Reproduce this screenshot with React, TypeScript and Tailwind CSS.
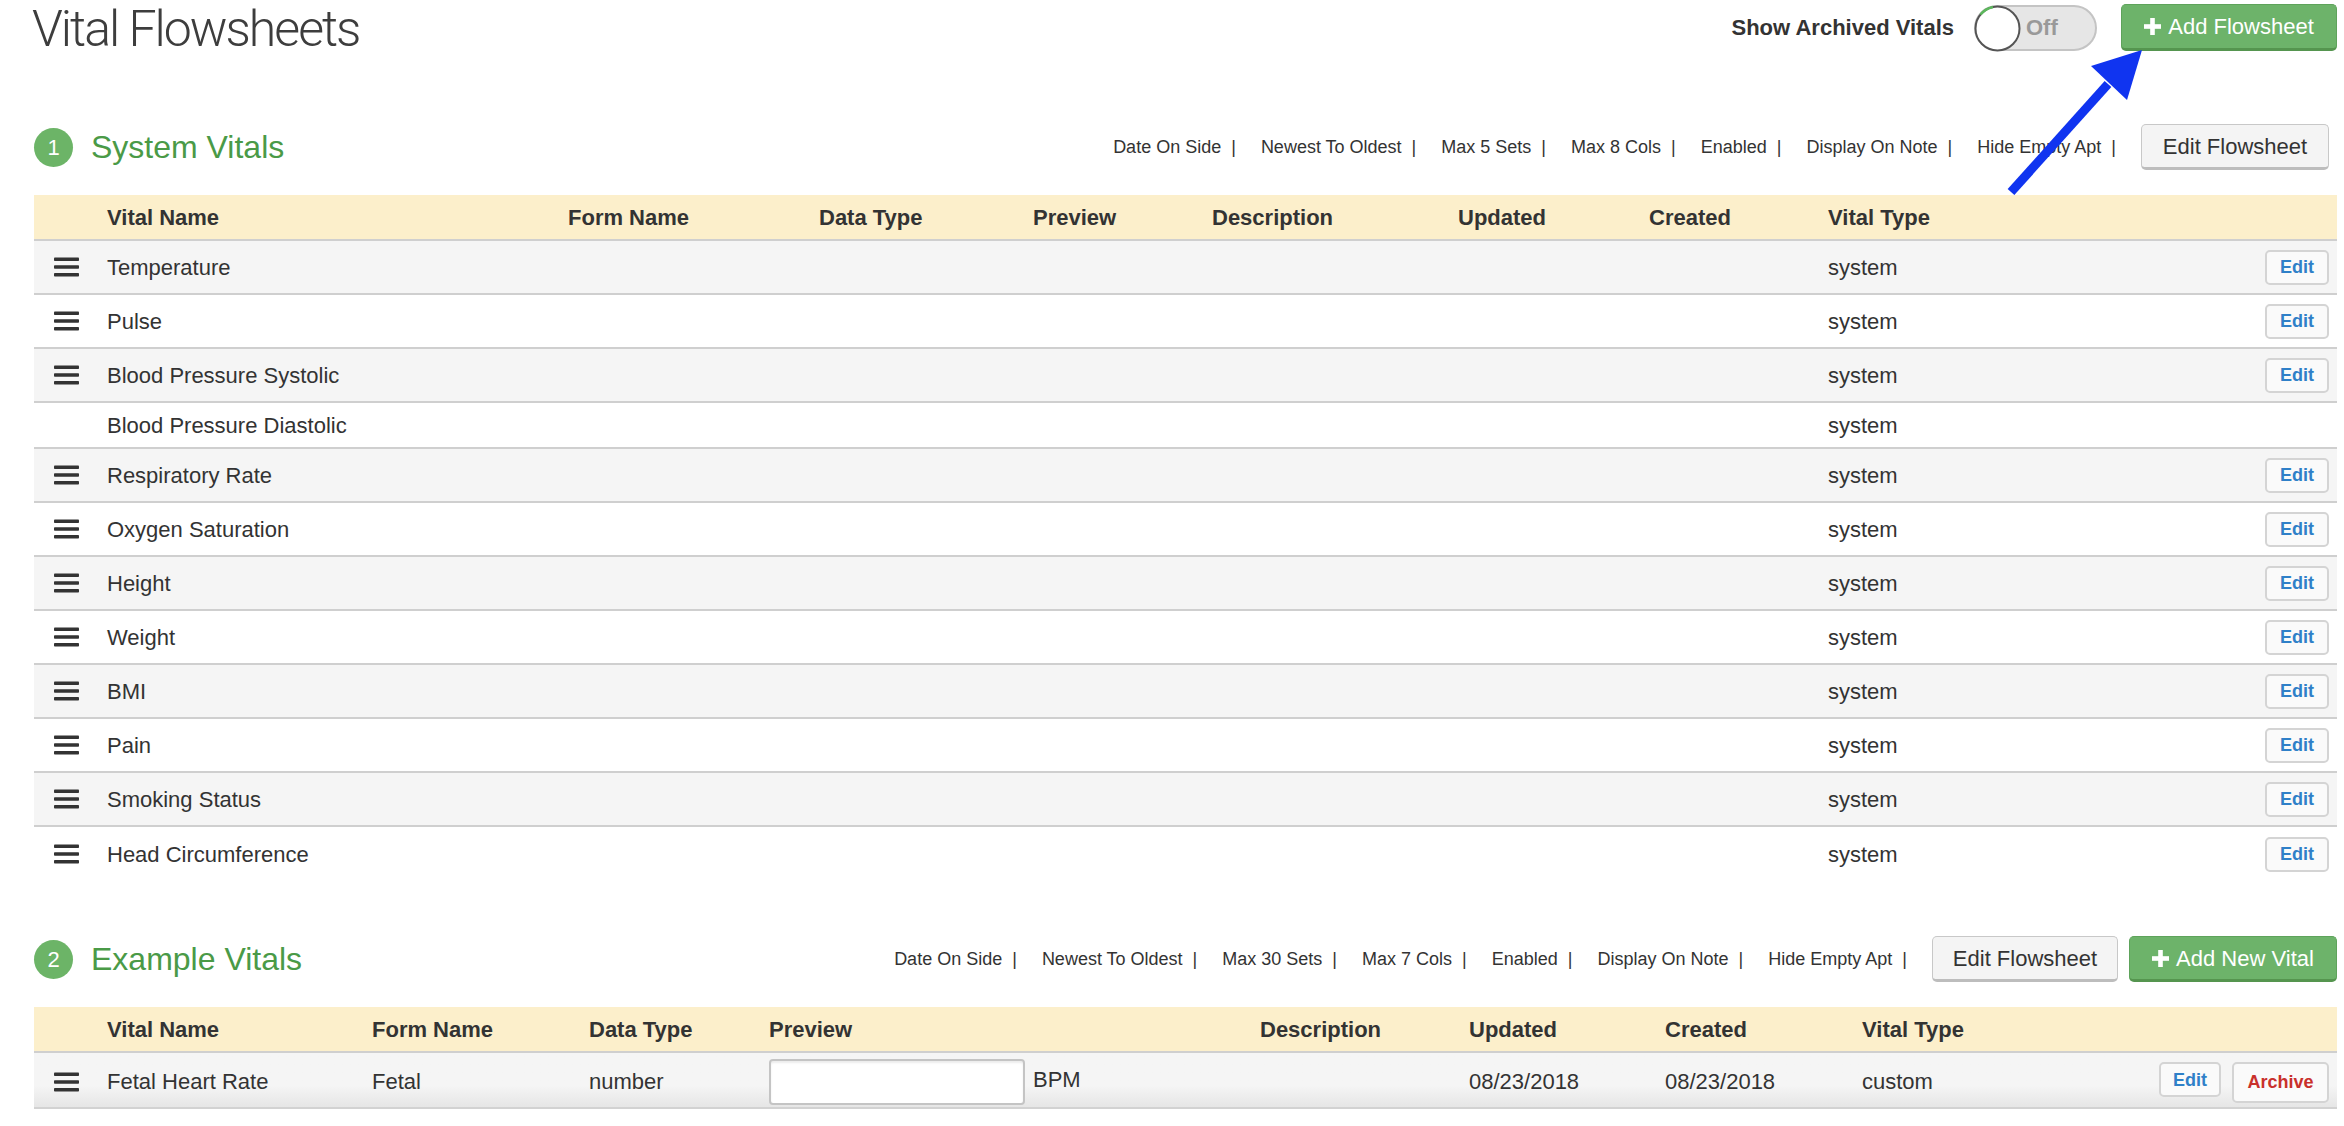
import React, { Fragment } from "react";

const Bars = () => (
  <svg width="25" height="20" viewBox="0 0 25 20" className="block">
    <rect x="0" y="0.5" width="25" height="3.6" rx="0.8" fill="#333" />
    <rect x="0" y="8.2" width="25" height="3.6" rx="0.8" fill="#333" />
    <rect x="0" y="15.9" width="25" height="3.6" rx="0.8" fill="#333" />
  </svg>
);

const Plus = () => (
  <svg width="17" height="17" viewBox="0 0 17 17" className="block">
    <rect x="6.2" y="0" width="4.6" height="17" fill="#fff" />
    <rect x="0" y="6.2" width="17" height="4.6" fill="#fff" />
  </svg>
);

const Settings = ({ items }: { items: string[] }) => (
  <div className="flex items-center text-[18px] text-[#333]">
    {items.map((t) => (
      <Fragment key={t}>
        <span className="whitespace-nowrap">{t}</span>
        <span className="ml-[10px] mr-[25px]">|</span>
      </Fragment>
    ))}
  </div>
);

const EditBtn = () => (
  <button className="w-[64px] h-[35px] rounded-[5px] border-2 border-[#d4d4d4] bg-[#fafafa] text-[18px] font-bold text-[#2f80c8] flex items-center justify-center">
    Edit
  </button>
);

const SectionHeading = ({ n, title }: { n: string; title: string }) => (
  <div className="flex items-center">
    <div className="w-[39px] h-[39px] rounded-full bg-[#6cb467] text-white text-[22px] flex items-center justify-center">
      {n}
    </div>
    <div className="ml-[18px] text-[32px] text-[#4a9a47] leading-[40px]">{title}</div>
  </div>
);

const sys = [
  "Temperature",
  "Pulse",
  "Blood Pressure Systolic",
  "Blood Pressure Diastolic",
  "Respiratory Rate",
  "Oxygen Saturation",
  "Height",
  "Weight",
  "BMI",
  "Pain",
  "Smoking Status",
  "Head Circumference",
];

export default function App() {
  return (
    <div className="relative min-h-[1126px] bg-white text-[#333] font-['Liberation_Sans',Arial,sans-serif] pl-[34px] pr-[7px] overflow-hidden">
      {/* Top bar */}
      <div className="flex justify-between items-start h-[56px]">
        <h1 className="ml-[-2px] mt-[-1px] text-[50px] leading-[60px] font-light text-[#3d3d3d] font-['Roboto','Liberation_Sans',sans-serif] tracking-[-2px] whitespace-nowrap">
          Vital Flowsheets
        </h1>
        <div className="flex items-center pt-[4px]">
          <span className="text-[22px] font-bold text-[#333] mr-[20px]">Show Archived Vitals</span>
          <div className="relative w-[123px] h-[46px] rounded-full bg-[#e6e6e6] border-2 border-[#c4c4c4] flex items-center pl-[50px]">
            <svg width="47" height="47" viewBox="0 0 47 47" className="absolute left-[-2px] top-[-2px]">
              <circle cx="23.5" cy="23.5" r="22" fill="#fff" stroke="#555" strokeWidth="2" />
              <path d="M6.5 9.5 A22 22 0 0 1 19 1.9" fill="none" stroke="#5cb85c" strokeWidth="2.6" />
            </svg>
            <span className="text-[22px] font-bold text-[#999]">Off</span>
          </div>
          <button className="ml-[24px] w-[216px] h-[47px] rounded-[5px] bg-[#6db36a] border border-[#5ea35b] border-b-[3px] border-b-[#55954f] flex items-center justify-center gap-[7px] text-white text-[22px]">
            <Plus />
            <span>Add Flowsheet</span>
          </button>
        </div>
      </div>

      {/* Section 1 heading */}
      <div className="mt-[68px] h-[46px] flex items-center">
        <SectionHeading n="1" title="System Vitals" />
        <div className="ml-auto flex items-center">
          <Settings
            items={[
              "Date On Side",
              "Newest To Oldest",
              "Max 5 Sets",
              "Max 8 Cols",
              "Enabled",
              "Display On Note",
              "Hide Empty Apt",
            ]}
          />
          <button className="w-[188px] h-[46px] mr-[8px] rounded-[5px] bg-[#f4f4f4] border border-[#c8c8c8] border-b-[3px] border-b-[#bdbdbd] text-[22px] text-[#333]">
            Edit Flowsheet
          </button>
        </div>
      </div>

      {/* Section 1 table */}
      <div className="mt-[25px] text-[22px]">
        <div className="flex items-center h-[46px] bg-[#fcefcb] border-b-2 border-[#cfcfcf] font-bold">
          <div className="w-[73px] shrink-0" />
          <div className="w-[461px] shrink-0">Vital Name</div>
          <div className="w-[251px] shrink-0">Form Name</div>
          <div className="w-[214px] shrink-0">Data Type</div>
          <div className="w-[179px] shrink-0">Preview</div>
          <div className="w-[246px] shrink-0">Description</div>
          <div className="w-[191px] shrink-0">Updated</div>
          <div className="w-[179px] shrink-0">Created</div>
          <div className="flex-1">Vital Type</div>
        </div>
        {sys.map((name, i) => {
          const noIcon = name === "Blood Pressure Diastolic";
          const last = i === sys.length - 1;
          return (
            <div
              key={name}
              className={`flex items-center ${noIcon ? "h-[46px]" : "h-[54px]"} ${i % 2 === 0 ? "bg-[#f5f5f5]" : "bg-white"} ${last ? "" : "border-b-2 border-[#cfcfcf]"}`}
            >
              <div className="w-[73px] shrink-0 pl-[20px]">{noIcon ? null : <Bars />}</div>
              <div className="w-[461px] shrink-0">{name}</div>
              <div className="w-[251px] shrink-0" />
              <div className="w-[214px] shrink-0" />
              <div className="w-[179px] shrink-0" />
              <div className="w-[246px] shrink-0" />
              <div className="w-[191px] shrink-0" />
              <div className="w-[179px] shrink-0" />
              <div className="flex-1">system</div>
              <div className="pr-[8px]">{noIcon ? null : <EditBtn />}</div>
            </div>
          );
        })}
      </div>

      {/* Section 2 heading */}
      <div className="mt-[55px] h-[46px] flex items-center">
        <SectionHeading n="2" title="Example Vitals" />
        <div className="ml-auto flex items-center">
          <Settings
            items={[
              "Date On Side",
              "Newest To Oldest",
              "Max 30 Sets",
              "Max 7 Cols",
              "Enabled",
              "Display On Note",
              "Hide Empty Apt",
            ]}
          />
          <button className="w-[186px] h-[46px] rounded-[5px] bg-[#f4f4f4] border border-[#c8c8c8] border-b-[3px] border-b-[#bdbdbd] text-[22px] text-[#333]">
            Edit Flowsheet
          </button>
          <button className="ml-[11px] w-[208px] h-[46px] rounded-[5px] bg-[#6db36a] border border-[#5ea35b] border-b-[3px] border-b-[#55954f] flex items-center justify-center gap-[7px] text-white text-[22px]">
            <Plus />
            <span>Add New Vital</span>
          </button>
        </div>
      </div>

      {/* Section 2 table */}
      <div className="mt-[25px] text-[22px]">
        <div className="flex items-center h-[46px] bg-[#fcefcb] border-b-2 border-[#cfcfcf] font-bold">
          <div className="w-[73px] shrink-0" />
          <div className="w-[265px] shrink-0">Vital Name</div>
          <div className="w-[217px] shrink-0">Form Name</div>
          <div className="w-[180px] shrink-0">Data Type</div>
          <div className="w-[491px] shrink-0">Preview</div>
          <div className="w-[209px] shrink-0">Description</div>
          <div className="w-[196px] shrink-0">Updated</div>
          <div className="w-[197px] shrink-0">Created</div>
          <div className="flex-1">Vital Type</div>
        </div>
        <div className="flex items-center h-[56px] pt-[3px] bg-gradient-to-b from-[#f5f5f5] from-60% to-[#e6e6e6] border-b-2 border-[#d2d2d2]">
          <div className="w-[73px] shrink-0 pl-[20px]">
            <Bars />
          </div>
          <div className="w-[265px] shrink-0">Fetal Heart Rate</div>
          <div className="w-[217px] shrink-0">Fetal</div>
          <div className="w-[180px] shrink-0">number</div>
          <div className="w-[491px] shrink-0 flex items-center self-start pt-[3px]">
            <div className="w-[256px] h-[46px] rounded-[4px] border-2 border-[#c4c4c4] bg-white shadow-[inset_0_2px_2px_rgba(0,0,0,0.08)]" />
            <span className="ml-[8px] mt-[-6px]">BPM</span>
          </div>
          <div className="w-[209px] shrink-0" />
          <div className="w-[196px] shrink-0">08/23/2018</div>
          <div className="w-[197px] shrink-0">08/23/2018</div>
          <div className="flex-1">custom</div>
          <div className="pr-[8px] flex items-start gap-[11px] self-start pt-[6px]">
            <button className="w-[62px] h-[35px] rounded-[5px] border-2 border-[#d4d4d4] bg-[#fafafa] text-[18px] font-bold text-[#2f80c8] flex items-start justify-center pt-[3px]">
              Edit
            </button>
            <button className="w-[97px] h-[41px] rounded-[5px] border-2 border-[#d4d4d4] bg-[#fafafa] text-[18px] font-bold text-[#c9302c] flex items-center justify-center">
              Archive
            </button>
          </div>
        </div>
      </div>

      {/* Annotation arrow */}
      <svg
        width="170"
        height="170"
        viewBox="0 0 170 170"
        className="absolute left-[1990px] top-[40px] pointer-events-none"
      >
        <line x1="21" y1="152" x2="118" y2="44" stroke="#1034f0" strokeWidth="9" />
        <polygon points="152,10 101,26 137,60" fill="#1034f0" />
      </svg>
    </div>
  );
}
